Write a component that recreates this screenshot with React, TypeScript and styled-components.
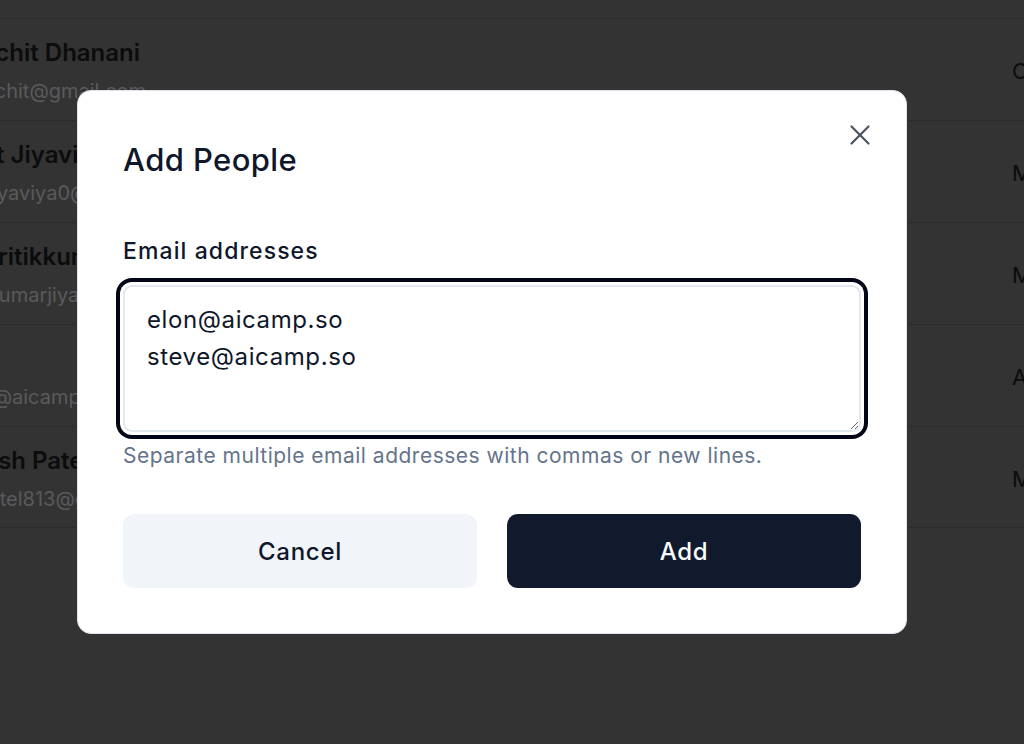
import React from 'react';
import styled, {createGlobalStyle} from 'styled-components';
import {X} from 'lucide-react';

const GlobalStyle = createGlobalStyle`
  html, body {
    margin: 0;
    height: 100%;
    overflow: hidden;
    background: #333333;
  }

  body {
    font-family: "Inter", "Noto Sans", sans-serif;
    -webkit-font-smoothing: antialiased;
  }

  #root {
    height: 100%;
  }
`;

const Page = styled.div`
  height: 100%;
  overflow: hidden;
  padding-top: 18px;
  box-sizing: border-box;
`;

const MemberList = styled.ul`
  list-style: none;
  margin: 0 0 0 -34px;
  padding: 0;
  width: calc(100% + 110px);
`;

const MemberRow = styled.li`
  display: flex;
  align-items: center;
  justify-content: space-between;
  height: 102px;
  box-sizing: border-box;
  padding: 18px 0 15px;
  border-top: 1px solid #2b2b2b;

  &:last-child {
    border-bottom: 1px solid #2b2b2b;
  }

  > .info {
    display: flex;
    flex-direction: column;
  }

  > .info > .name {
    font-size: 24px;
    line-height: 32px;
    font-weight: 600;
    color: #0c0c0d;
    min-height: 32px;
    white-space: nowrap;
  }

  > .info > .email {
    margin: 8px 0 0 10px;
    font-size: 20px;
    line-height: 28px;
    color: #5a5a5c;
    white-space: nowrap;
  }

  > .role {
    width: 88px;
    font-size: 22px;
    color: #0c0c0d;
    white-space: nowrap;
  }
`;

const Overlay = styled.div`
  position: fixed;
  inset: 0;
  display: flex;
  align-items: flex-start;
  justify-content: flex-start;
  padding: 90px 0 0 77px;
`;

const Dialog = styled.div`
  position: relative;
  width: 830px;
  box-sizing: border-box;
  padding: 50px 45px 45px;
  background: #ffffff;
  border: 1px solid #dfe4ec;
  border-radius: 14px;
  display: flex;
  flex-direction: column;
`;

const Title = styled.h2`
  margin: 0;
  font-size: 31px;
  line-height: 38px;
  font-weight: 500;
  color: #0f172a;
  letter-spacing: 0.4px;
`;

const CloseButton = styled.button`
  position: absolute;
  top: 27px;
  right: 29px;
  width: 34px;
  height: 34px;
  padding: 0;
  border: none;
  background: transparent;
  color: #4b5563;
  display: flex;
  align-items: center;
  justify-content: center;
  cursor: pointer;
`;

const Label = styled.label`
  margin-top: 57px;
  font-size: 23px;
  line-height: 30px;
  font-weight: 500;
  color: #0f172a;
  letter-spacing: 1.1px;
`;

const EmailInput = styled.textarea`
  margin-top: 19px;
  height: 147px;
  box-sizing: border-box;
  padding: 14px 22px;
  border: 2px solid #e2e8f0;
  border-radius: 9px;
  box-shadow: 0 0 0 3px #ffffff, 0 0 0 7px #020617;
  outline: none;
  font-family: inherit;
  font-size: 24px;
  line-height: 37px;
  letter-spacing: 0.6px;
  color: #0f172a;
  background: #ffffff;
`;

const Hint = styled.p`
  margin: 10px 0 0;
  font-size: 21px;
  line-height: 28px;
  letter-spacing: 0.5px;
  color: #64748b;
`;

const Actions = styled.div`
  margin-top: 44px;
  display: grid;
  grid-template-columns: 1fr 1fr;
  gap: 30px;
`;

const ActionButton = styled.button<{$primary?: boolean}>`
  height: 74px;
  border: none;
  border-radius: 11px;
  font-family: inherit;
  font-size: 24px;
  font-weight: 500;
  letter-spacing: 0.7px;
  cursor: pointer;
  background: ${p => (p.$primary ? '#111a2c' : '#f1f5f9')};
  color: ${p => (p.$primary ? '#f8fafc' : '#0f172a')};
`;

type Member = {
  name: string
  email: string
  role: string
}

const members: Member[] = [
  {name: 'Rachit Dhanani', email: 'rachit@gmail.com', role: 'Owner'},
  {name: 'Ajit Jiyaviya', email: 'ajiyaviya0@gmail.com', role: 'Member'},
  {name: 'Dhritikkumar Jiyaviya', email: 'hkumarjiyaviya@gmail.com', role: 'Member'},
  {name: '', email: 'hi@aicamp.so', role: 'Admin'},
  {name: 'Ansh Patel', email: 'patel813@gmail.com', role: 'Member'},
];

const App: React.FC = () => {
  return (
    <>
      <GlobalStyle/>
      <Page>
        <MemberList>
          {members.map(m => (
            <MemberRow key={m.email}>
              <div className='info'>
                <div className='name'>{m.name}</div>
                <div className='email'>{m.email}</div>
              </div>
              <div className='role'>{m.role}</div>
            </MemberRow>
          ))}
        </MemberList>
      </Page>
      <Overlay>
        <Dialog role='dialog'>
          <Title>Add People</Title>
          <CloseButton aria-label='Close'>
            <X size={34} strokeWidth={1.6}/>
          </CloseButton>
          <Label htmlFor='emails'>Email addresses</Label>
          <EmailInput id='emails' defaultValue={'elon@aicamp.so\nsteve@aicamp.so'}/>
          <Hint>Separate multiple email addresses with commas or new lines.</Hint>
          <Actions>
            <ActionButton>Cancel</ActionButton>
            <ActionButton $primary>Add</ActionButton>
          </Actions>
        </Dialog>
      </Overlay>
    </>
  );
};

export default App;
